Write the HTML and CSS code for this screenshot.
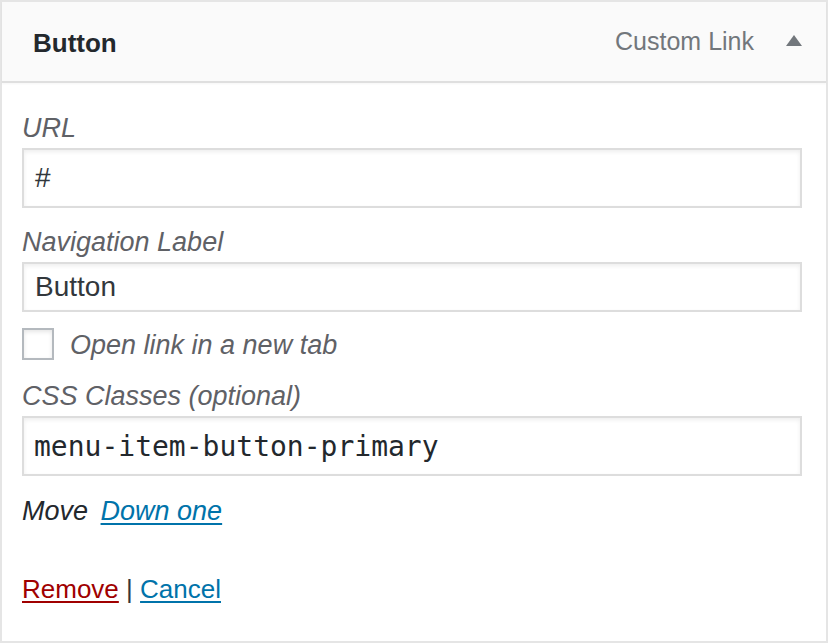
FILE: index.html
```html
<!DOCTYPE html>
<html>
<head>
<meta charset="utf-8">
<link rel="stylesheet" href="styles.css">
</head>
<body>
<div class="menu-item">
  <div class="item-bar">
    <span class="item-title">Button</span>
    <span class="item-controls">
      <span class="item-type">Custom Link</span>
      <svg class="toggle" width="16" height="11" viewBox="0 0 16 11"><polygon points="8,0 16,11 0,11" fill="#72777c"/></svg>
    </span>
  </div>
  <div class="item-settings">
    <div class="field">
      <div class="label">URL</div>
      <div class="input tall">#</div>
    </div>
    <div class="field">
      <div class="label">Navigation Label</div>
      <div class="input">Button</div>
    </div>
    <div class="check-row">
      <span class="checkbox"></span>
      <span class="label">Open link in a new tab</span>
    </div>
    <div class="field">
      <div class="label">CSS Classes (optional)</div>
      <div class="input tall mono">menu-item-button-primary</div>
    </div>
    <div class="move-row">
      <span class="move">Move</span>
      <a class="link" href="#">Down one</a>
    </div>
    <div class="actions">
      <a class="remove" href="#">Remove</a> <span class="sep">|</span> <a class="link" href="#">Cancel</a>
    </div>
  </div>
</div>
</body>
</html>
```

FILE: styles.css
```css
html, body {
  margin: 0;
  padding: 0;
  background: #ffffff;
}
body {
  font-family: "Liberation Sans", Arial, sans-serif;
}
.menu-item {
  width: 828px;
  height: 643px;
  box-sizing: border-box;
  border: 2px solid #e5e5e5;
  border-bottom: none;
  display: flex;
  flex-direction: column;
}
.item-bar {
  box-sizing: border-box;
  background: #fafafa;
  border-bottom: 2px solid #dfdfdf;
  box-shadow: 0 1px 2px rgba(0,0,0,0.04);
  display: flex;
  align-items: center;
  justify-content: space-between;
  padding: 3px 24px 0 31px;
  height: 81px;
}
.item-title {
  font-size: 26px;
  font-weight: bold;
  color: #23282d;
  line-height: 76px;
}
.item-controls {
  display: flex;
  align-items: center;
  gap: 32px;
}
.item-type {
  font-size: 25px;
  color: #72777c;
  line-height: 76px;
  position: relative;
  top: -2px;
}
.toggle {
  display: block;
  position: relative;
  top: -3px;
}
.item-settings {
  flex: 1;
  padding: 27px 24px 0 20px;
  border-bottom: 2px solid #e5e5e5;
  display: flex;
  flex-direction: column;
}
.field {
  margin-bottom: 16px;
}
.label {
  font-size: 27px;
  font-style: italic;
  color: #5f6166;
  line-height: 36px;
  margin-bottom: 2px;
}
.input {
  height: 50px;
  box-sizing: border-box;
  border: 2px solid #dddddd;
  box-shadow: inset 0 2px 4px rgba(0,0,0,0.07);
  padding: 0 11px;
  font-size: 28px;
  color: #32373c;
  display: flex;
  align-items: center;
}
.input.tall {
  height: 60px;
}
.mono {
  font-family: "DejaVu Sans Mono", monospace;
  font-size: 28px;
  padding-left: 10px;
  color: #23282d;
}
.check-row {
  display: flex;
  align-items: center;
  gap: 16px;
  margin-top: -2px;
  margin-bottom: 16px;
}
.check-row .label {
  margin-bottom: 0;
  position: relative;
  top: 1px;
}
.checkbox {
  width: 32px;
  height: 32px;
  box-sizing: border-box;
  border: 2px solid #b4b9be;
  background: #fff;
  box-shadow: inset 0 2px 4px rgba(0,0,0,0.1);
}
.move-row {
  font-size: 27px;
  line-height: 36px;
  font-style: italic;
  margin-top: 1px;
}
.move {
  color: #23282d;
  margin-right: 5px;
}
.link {
  color: #0073aa;
  text-decoration: underline;
  text-decoration-thickness: 2px;
  text-underline-offset: 3px;
}
.actions {
  margin-top: 42px;
  font-size: 26px;
  line-height: 36px;
  color: #555555;
}
.remove {
  color: #a00000;
  text-decoration: underline;
  text-decoration-thickness: 2px;
  text-underline-offset: 3px;
}
.sep {
  color: #32373c;
}
```
